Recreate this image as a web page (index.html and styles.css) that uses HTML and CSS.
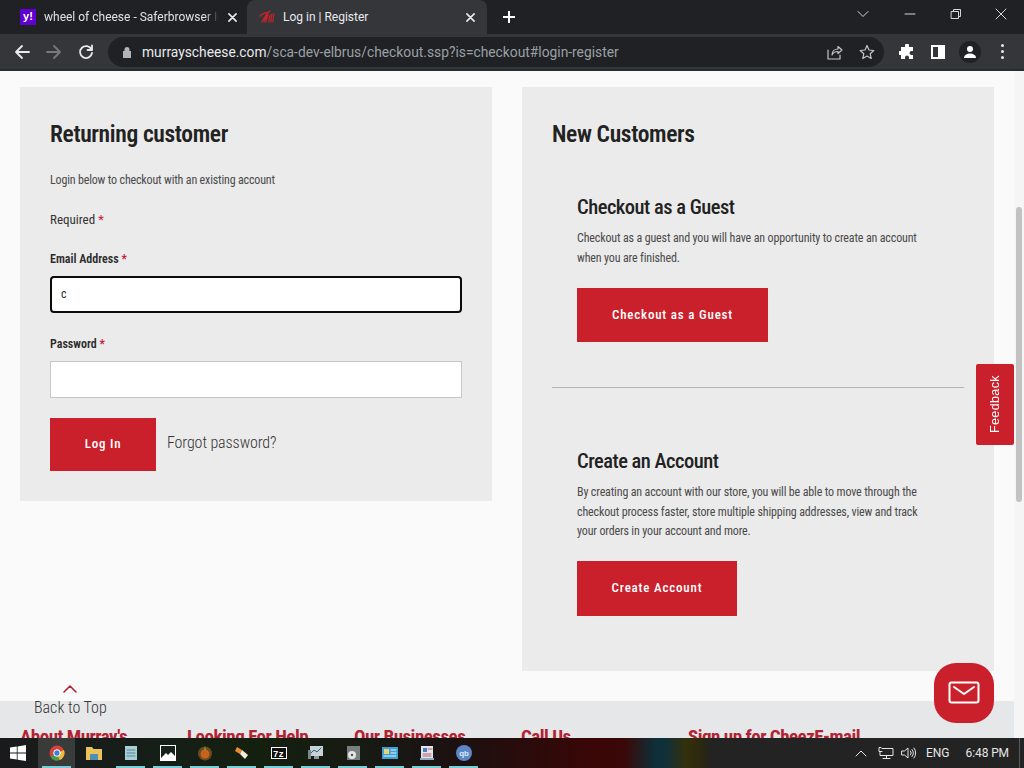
FILE: index.html
```html
<!DOCTYPE html>
<html lang="en">
<head>
<meta charset="utf-8">
<title>Log in | Register</title>
<link rel="stylesheet" href="styles.css">
</head>
<body>
<div class="screen">
  <header class="tabbar">
    <div class="tab tab-inactive">
      <span class="favicon-y">y!</span>
      <span class="tab-title tab-title-fade">wheel of cheese - Saferbrowser Ie</span>
      <svg class="tab-close" viewBox="0 0 10 10"><path d="M1 1l8 8M9 1l-8 8"/></svg>
    </div>
    <div class="tab tab-active">
      <svg class="favicon-m" viewBox="0 0 18 14"><path d="M3 12C5 8 7 4 11 1M1 6c2-2 6-4 8-3-2 3-3 6-4 9M9 5c-1 2-2 5-2 7M11 5c-1 2-1 5-1 7M13 4c-1 3-1 6-1 8M15 4c-1 3-1 6-1 8"/></svg>
      <span class="tab-title">Log in | Register</span>
      <svg class="tab-close" viewBox="0 0 10 10"><path d="M1 1l8 8M9 1l-8 8"/></svg>
    </div>
    <svg class="new-tab" viewBox="0 0 12 12"><path d="M6 0v12M0 6h12"/></svg>
    <div class="window-controls">
      <svg class="wc wc-chevron" viewBox="0 0 12 12"><path d="M1 3.500l5 5 5-5"/></svg>
      <svg class="wc wc-min" viewBox="0 0 12 12"><path d="M1 6h10"/></svg>
      <svg class="wc wc-restore" viewBox="0 0 12 12"><path d="M1.500 3.500h7v7h-7zM3.500 3.500v-2h7v7h-2"/></svg>
      <svg class="wc wc-close" viewBox="0 0 12 12"><path d="M1 1l10 10M11 1L1 11"/></svg>
    </div>
  </header>

  <nav class="toolbar">
    <svg class="nav-icon" viewBox="0 0 16 16"><path d="M15 8H2M8 2L2 8l6 6"/></svg>
    <svg class="nav-icon nav-disabled" viewBox="0 0 16 16"><path d="M1 8h13M8 2l6 6-6 6"/></svg>
    <svg class="nav-icon" viewBox="0 0 16 16"><path d="M13.500 5.500A6 6 0 1 0 14 9M14 1.500V6H9.500"/></svg>
    <div class="omnibox">
      <svg class="lock" viewBox="0 0 10 12"><path d="M2.500 5V3.500a2.500 2.500 0 0 1 5 0V5H9v7H1V5z"/></svg>
      <span class="url"><span class="url-host">murrayscheese.com</span>/sca-dev-elbrus/checkout.ssp?is=checkout#login-register</span>
      <svg class="omni-icon omni-share" viewBox="0 0 16 16"><path d="M5 11c0-4 3-6 6-6V2.500L15 6l-4 3.500V7.500c-3 0-5 1-6 3.500zM1 6v9h12v-4"/></svg>
      <svg class="omni-icon omni-star" viewBox="0 0 16 16"><path d="M8 1.500l2 4.500 4.800.5-3.600 3.200 1 4.800L8 12l-4.200 2.500 1-4.800L1.200 6.500 6 6z"/></svg>
    </div>
    <svg class="tool-icon" viewBox="0 0 16 16"><path class="fill-white" d="M6 1.500a2 2 0 0 1 4 0V3h4v4h-1.500a2 2 0 0 0 0 4H14v4h-4v-1.500a2 2 0 0 0-4 0V15H2v-4H.5a2 2 0 0 1 0-4H2V3h4z"/></svg>
    <div class="sidepanel"><span class="sidepanel-gap"></span></div>
    <div class="avatar">
      <svg viewBox="0 0 16 16"><circle class="fill-white" cx="8" cy="5" r="3"/><path class="fill-white" d="M2 14c0-3 3-4.500 6-4.500s6 1.500 6 4.500z"/></svg>
    </div>
    <div class="kebab"><i></i><i></i><i></i></div>
  </nav>

  <main class="page">
    <div class="columns">
      <section class="card card-login">
        <h2 class="card-title">Returning customer</h2>
        <p class="intro">Login below to checkout with an existing account</p>
        <p class="required">Required <span class="star">*</span></p>
        <label class="field-label field-label-email">Email Address <span class="star">*</span></label>
        <div class="input input-focus">c</div>
        <label class="field-label">Password <span class="star">*</span></label>
        <div class="input"></div>
        <div class="login-actions">
          <button class="btn btn-login">Log In</button>
          <a class="forgot">Forgot password?</a>
        </div>
      </section>
      <section class="card card-new">
        <h2 class="card-title">New Customers</h2>
        <div class="option option-guest">
          <h3 class="option-title">Checkout as a Guest</h3>
          <p class="option-text">Checkout as a guest and you will have an opportunity to create an account<br>when you are finished.</p>
          <button class="btn btn-guest">Checkout as a Guest</button>
        </div>
        <hr class="divider">
        <div class="option option-account">
          <h3 class="option-title">Create an Account</h3>
          <p class="option-text">By creating an account with our store, you will be able to move through the<br>checkout process faster, store multiple shipping addresses, view and track<br>your orders in your account and more.</p>
          <button class="btn btn-account">Create Account</button>
        </div>
      </section>
    </div>
    <footer class="footer">
      <h4 class="foot-head">About Murray's</h4>
      <h4 class="foot-head">Looking For Help</h4>
      <h4 class="foot-head">Our Businesses</h4>
      <h4 class="foot-head">Call Us</h4>
      <h4 class="foot-head">Sign up for CheezE-mail</h4>
    </footer>
    <a class="back-top">
      <svg class="back-chevron" viewBox="0 0 14 8"><path d="M1 7l6-6 6 6"/></svg>
      <span>Back to Top</span>
    </a>
    <div class="scrollbar"><div class="scroll-thumb"></div></div>
    <div class="feedback"><span>Feedback</span></div>
    <div class="mail-btn">
      <svg viewBox="0 0 32 24"><rect x="1.500" y="1.500" width="29" height="20" rx="2"/><path d="M6 6l10 7 10-7"/></svg>
    </div>
  </main>

  <footer class="taskbar">
    <svg class="start" viewBox="0 0 16 16"><path class="fill-white" d="M0 2.500l6.800-1v6H0zM7.600 1.400L16 0v7.500H7.600zM0 8.400h6.800v6L0 13.500zM7.600 8.400H16V16l-8.400-1.200z"/></svg>
    <div class="task task-active"><svg viewBox="0 0 16 16"><circle cx="8" cy="8" r="7.500" fill="#d8413a"/><path d="M8 8L1.500 12a7.500 7.500 0 0 0 9 3.100z" fill="#3f9d4b"/><path d="M8 8l6.900-3a7.500 7.500 0 0 1-4.400 10.100z" fill="#e9bd35"/><circle cx="8" cy="8" r="3.300" fill="#3d7fd9" stroke="#fff"/></svg></div>
    <div class="task task-open"><svg viewBox="0 0 16 16"><path d="M0 2h6l1.500 2H16v11H0z" fill="#e9c25a"/><rect x="4" y="9" width="8" height="6" fill="#4f8fb5"/></svg></div>
    <div class="task"><svg viewBox="0 0 16 16"><rect x="2" y="1" width="12" height="14" fill="#a6d0d8"/><path d="M4 5h8M4 8h8M4 11h8" stroke="#5d8791"/></svg></div>
    <div class="task"><svg viewBox="0 0 16 16"><rect width="16" height="16" fill="#fff"/><path d="M1 1h14v10l-4-4-3 3-2-2-5 5z" fill="#15231a"/></svg></div>
    <div class="task"><svg viewBox="0 0 16 16"><circle cx="8" cy="8.500" r="7" fill="#6b4a1f"/><circle cx="8" cy="9" r="4.500" fill="#c4641e"/><path d="M8 1l1 4H7z" fill="#6db33f"/></svg></div>
    <div class="task"><svg viewBox="0 0 16 16"><path d="M3 2l5 3-2 4-5-3z" fill="#e58b35"/><path d="M8 5l6 5-3 4-5-5z" fill="#f5ead7"/></svg></div>
    <div class="task"><svg viewBox="0 0 16 16"><rect y="2" width="16" height="12" fill="#fff"/><rect x="1" y="3" width="14" height="10" fill="#111"/><text class="seven" x="2" y="11.500">7z</text></svg></div>
    <div class="task"><svg viewBox="0 0 16 16"><rect x="2" y="1" width="13" height="10" fill="#c7d3d8"/><path d="M3 8l3-3 3 2 4-4" stroke="#2f5f78" fill="none"/><path d="M6 11h5v3H6z" fill="#8e9a9e"/><rect y="5" width="3" height="9" fill="#7b878b"/></svg></div>
    <div class="task"><svg viewBox="0 0 16 16"><rect x="2" y="1" width="13" height="14" fill="#77807f"/><circle cx="7" cy="10" r="4" fill="#e6e6e6"/><circle cx="7" cy="10" r="1.200" fill="#555"/></svg></div>
    <div class="task"><svg viewBox="0 0 16 16"><rect y="2" width="16" height="12" fill="#3f9fd3"/><rect x="2" y="4" width="5" height="5" fill="#e4d47c"/><path d="M9 5h5M9 8h5M2 11h12" stroke="#e8f4fa"/></svg></div>
    <div class="task"><svg viewBox="0 0 16 16"><rect x="2" y="1" width="12" height="13" fill="#dfe6ef"/><rect x="4" y="3" width="4" height="4" fill="#4a7fc0"/><path d="M9 4h4M4 9h8M4 11h8" stroke="#c25c5c"/><rect x="1" y="13" width="14" height="2" fill="#8ea7c9"/></svg></div>
    <div class="task"><svg viewBox="0 0 16 16"><circle cx="8" cy="8" r="8" fill="#5b86c7"/><text class="qb" x="3.200" y="11">qb</text></svg></div>
    <div class="tray">
      <svg class="tray-icon tray-up" viewBox="0 0 12 8"><path d="M1 7l5-5 5 5"/></svg>
      <svg class="tray-icon tray-net" viewBox="0 0 16 14"><path d="M3 1.500H1v4h3M4 2.500h11v7H2v-4M8.500 9.500v3M5 12.500h7"/></svg>
      <svg class="tray-icon tray-vol" viewBox="0 0 16 14"><path d="M1 5h2.500L7 2v10L3.500 9H1zM9.500 5a3 3 0 0 1 0 4M11 3.500a5.500 5.500 0 0 1 0 7M13 2a8 8 0 0 1 0 10"/></svg>
      <span class="tray-lang">ENG</span>
      <span class="tray-time">6:48 PM</span>
    </div>
  </footer>
</div>
</body>
</html>
```
FILE: styles.css
```css
* { box-sizing: border-box; }
html, body { margin: 0; height: 100%; overflow: hidden; }
body { font-family: Roboto, "Liberation Sans", sans-serif; font-stretch: 75%; color: #2b2b2b; }
h2, h3, h4, p { margin: 0; }
svg { display: block; fill: none; stroke-linecap: round; stroke-linejoin: round; }
.fill-white { fill: #fff; }
.screen { width: 1024px; height: 768px; display: flex; flex-direction: column; overflow: hidden; }

/* Tab strip */
.tabbar { height: 34px; background: #202124; display: flex; align-items: center; padding-left: 8px; flex: none; font-family: Roboto, sans-serif; font-stretch: 100%; font-size: 12px; color: #e8eaed; }
.tab { height: 34px; display: flex; align-items: center; }
.tab-inactive { width: 239px; padding-left: 12px; }
.tab-active { width: 240px; padding-left: 12px; background: #35363a; border-radius: 8px 8px 0 0; }
.favicon-y { width: 16px; height: 16px; background: #5f01d1; color: #fff; font: bold 11px/15px "Liberation Sans", sans-serif; text-align: center; flex: none; }
.favicon-m { width: 18px; height: 14px; stroke: #c9252c; stroke-width: 1.200; flex: none; margin-right: 6px; }
.tab-title { white-space: nowrap; overflow: hidden; flex: 1; min-width: 0; }
.tab-inactive .tab-title { margin-left: 8px; }
.tab-title-fade { color: #dfe1e5; -webkit-mask-image: linear-gradient(90deg, #000 92%, transparent 100%); mask-image: linear-gradient(90deg, #000 92%, transparent 100%); }
.tab-close { width: 9px; height: 9px; stroke: #e8eaed; stroke-width: 1.800; flex: none; }
.tab-inactive .tab-close { margin-right: 10px; margin-left: 9px; }
.tab-active .tab-close { margin-right: 12px; }
.new-tab { width: 12px; height: 12px; stroke: #fff; stroke-width: 2; margin-left: 16px; }
.window-controls { margin-left: auto; display: flex; align-items: center; height: 34px; }
.wc { width: 12px; height: 12px; stroke: #d6d7d9; stroke-width: 1; margin-top: -6px; }
.wc-chevron { margin-right: 35px; }
.wc-min { margin-right: 34px; }
.wc-restore { margin-right: 33px; }
.wc-close { margin-right: 17px; }

/* Toolbar */
.toolbar { height: 37px; background: #35363a; border-bottom: 2px solid #2a2b2e; display: flex; align-items: center; padding-left: 14px; flex: none; }
.nav-icon { width: 16px; height: 16px; stroke: #e8eaed; stroke-width: 1.800; margin-right: 16px; }
.nav-disabled { stroke: #77797c; }
.omnibox { width: 776px; height: 30px; border-radius: 15px; background: #202124; display: flex; align-items: center; margin-left: -2px; padding-left: 14px; font-family: Roboto, sans-serif; font-stretch: 100%; font-size: 13.800px; color: #9aa0a6; margin-right: 15px; }
.lock { width: 10px; height: 12px; fill: #b0b3b7; flex: none; margin-right: 10px; }
.url { white-space: nowrap; flex: 1; }
.url-host { color: #e8eaed; }
.omni-icon { width: 16px; height: 16px; stroke: #c4c7c9; stroke-width: 1.200; flex: none; }
.omni-share { margin-right: 16px; }
.omni-star { margin-right: 9px; }
.tool-icon { width: 16px; height: 16px; flex: none; margin-right: 16px; }
.sidepanel { width: 14px; height: 14px; background: #fff; padding: 2px 7px 2px 2px; flex: none; margin-right: 14px; }
.sidepanel-gap { display: block; width: 5px; height: 10px; background: #35363a; }
.avatar { width: 22px; height: 22px; border-radius: 50%; background: #202124; padding: 3px; flex: none; margin-right: 20px; }
.kebab { display: flex; flex-direction: column; gap: 3px; }
.kebab i { display: block; width: 3px; height: 3px; border-radius: 50%; background: #e8eaed; }

/* Page */
.page { flex: 1; min-height: 0; position: relative; background: #fafafa; padding-top: 16px; overflow: hidden; }
.columns { display: flex; align-items: flex-start; gap: 30px; padding-left: 20px; }
.card { width: 472px; background: #ebebeb; padding: 30px; }
.card-login { height: 414px; }
.card-new { height: 584px; }
.card-title { font-size: 23.500px; line-height: 34px; font-weight: 600; color: #222; letter-spacing: -.35px; }
.intro { font-size: 12px; line-height: 16px; margin-top: 21px; color: #4a4a4a; letter-spacing: -.17px; }
.required { font-size: 13px; line-height: 18px; margin-top: 23px; color: #333; }
.star { color: #c8202d; }
.field-label { display: block; font-size: 12px; line-height: 16px; font-weight: 600; color: #2a2a2a; margin-top: 23px; }
.field-label-email { margin-top: 22px; }
.input { height: 37px; background: #fff; border: 1px solid #c6c6c6; margin-top: 9px; padding-left: 10px; font-size: 12px; line-height: 35px; color: #333; }
.input-focus { border: 2px solid #0b0b0b; border-radius: 4px; padding-left: 9px; line-height: 33px; }
.login-actions { display: flex; align-items: center; gap: 11px; margin-top: 20px; }
.btn { border: 0; background: #c9202b; color: #fff; font-family: inherit; font-stretch: 75%; font-weight: 500; font-size: 13px; letter-spacing: .8px; padding: 0 0 2px; display: block; }
.btn-login { width: 106px; height: 53px; }
.forgot { font-size: 16px; color: #333; font-weight: 300; letter-spacing: -.1px; margin-bottom: 4px; }
.option { padding-left: 25px; }
.option-title { font-size: 20.500px; line-height: 28px; font-weight: 500; color: #222; letter-spacing: -.5px; }
.option-guest { margin-top: 42px; }
.option-account { margin-top: 59px; }
.option-text { font-size: 12px; line-height: 19.500px; color: #4a4a4a; margin-top: 8px; letter-spacing: -.15px; }
.btn-guest { width: 191px; height: 54px; margin-top: 20px; }
.btn-account { width: 160px; height: 55px; margin-top: 19px; }
.divider { border: 0; border-top: 1px solid #b5b5b5; margin: 45px 0 0; }

.footer { width: 1014px; height: 90px; background: #e6e7e8; margin-top: 30px; padding: 23px 0 0 20px; display: flex; }
.foot-head { font-size: 19px; line-height: 26px; font-weight: 700; color: #b22233; white-space: nowrap; width: 167px; flex: none; letter-spacing: -.5px; }

.back-top { position: absolute; left: 34px; top: 614px; display: flex; flex-direction: column; align-items: center; font-size: 16px; line-height: 22px; font-weight: 300; color: #333; }
.back-chevron { width: 14px; height: 8px; stroke: #b22233; stroke-width: 1.600; margin-bottom: 4px; }
.scrollbar { position: absolute; right: 0; top: 0; bottom: 0; width: 10px; background: #f5f5f5; }
.scroll-thumb { margin: 136px 0 0 2px; width: 6px; height: 295px; background: #c2c2c2; border-radius: 3px; }
.feedback { position: absolute; left: 976px; top: 293px; width: 38px; height: 81px; background: #c9202b; display: flex; align-items: center; justify-content: center; border-radius: 2px; }
.feedback span { writing-mode: vertical-rl; transform: rotate(180deg); color: #fff; font: 12.500px/16px "Liberation Sans", sans-serif; letter-spacing: .4px; }
.mail-btn { position: absolute; left: 934px; top: 592px; width: 60px; height: 60px; background: #c9202b; border-radius: 22px; display: flex; align-items: center; justify-content: center; }
.mail-btn svg { width: 32px; height: 24px; stroke: #fff; stroke-width: 2; }

/* Taskbar */
.taskbar { height: 30px; flex: none; display: flex; align-items: stretch; background: linear-gradient(90deg, #1a1a1c 0, #161e18 15%, #14200f 25%, #181814 38%, #1c1010 45%, #3a0606 58%, #3a0808 61%, #0d3038 64%, #103038 65%, #34300c 67%, #2a2810 68.500%, #232323 69.500%, #232323 100%); }
.start { width: 16px; height: 16px; margin: 7px 12px 0 10px; }
.task { width: 37px; position: relative; display: flex; justify-content: center; padding-top: 7px; }
.task svg { width: 16px; height: 16px; }
.task::after { content: ""; position: absolute; left: 4px; right: 4px; bottom: 0; height: 2px; background: #76cfd6; }
.task-active { background: rgba(255,255,255,.14); }
.task-open::after { display: none; }
.seven { font: bold 9px "Liberation Mono", monospace; fill: #fff; }
.qb { font: bold 8px "Liberation Sans", sans-serif; fill: #dce8f6; }
.tray { margin-left: auto; margin-right: 4px; display: flex; align-items: center; color: #e6e6e6; font-family: Roboto, sans-serif; font-stretch: 100%; font-size: 12px; padding-right: 10px; border-right: 1px solid #5a5a5a; }
.tray-icon { stroke: #e6e6e6; stroke-width: 1; }
.tray-up { width: 12px; height: 8px; margin-right: 11px; }
.tray-net { width: 16px; height: 14px; margin-right: 7px; }
.tray-vol { width: 16px; height: 14px; margin-right: 9px; }
.tray-lang { margin-right: 16px; }
.tray-time { letter-spacing: -.1px; }
```
